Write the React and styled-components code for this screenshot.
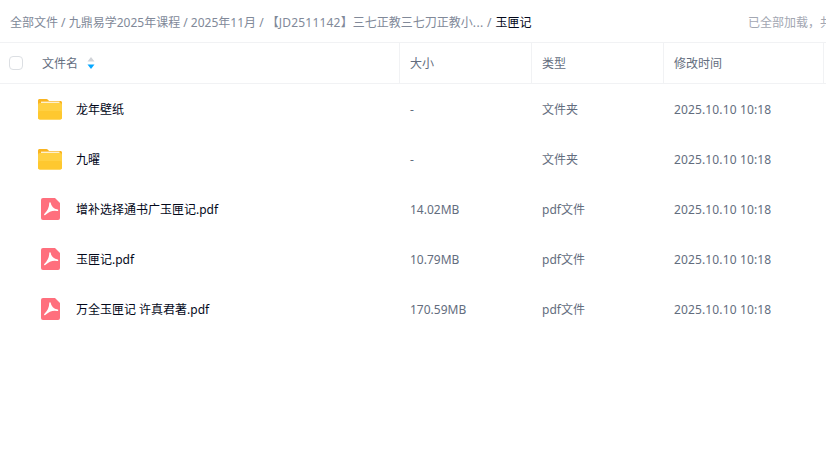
import React from 'react';
import styled, { createGlobalStyle } from 'styled-components';

const GlobalStyle = createGlobalStyle`
  html, body {
    margin: 0;
    padding: 0;
    background: #ffffff;
    overflow: hidden;
  }
  body {
    font-family: "Noto Sans", "Noto Sans CJK SC", sans-serif;
    line-height: 18px;
  }
`;

const Page = styled.div`
  height: 453px;
  overflow: hidden;
  width: 826px;
`;

const Breadcrumb = styled.div`
  align-items: center;
  box-sizing: border-box;
  display: flex;
  height: 42px;
  justify-content: space-between;
  padding-left: 10px;
  padding-top: 4px;
  white-space: nowrap;
`;

const Trail = styled.div`
  color: #818999;
  font-size: 12px;
`;

const Code = styled.span`
  letter-spacing: 0.2px;
`;

const Dots = styled.span`
  letter-spacing: 0.5px;
`;

const Current = styled.span`
  color: #03081a;
  margin-left: 1px;
`;

const Loaded = styled.div`
  color: #a3a7b2;
  font-size: 12px;
  overflow: hidden;
  width: 78px;
`;

const HeadRow = styled.div`
  border-bottom: 1px solid #f1f2f4;
  border-top: 1px solid #f1f2f4;
  display: grid;
  grid-template-columns: 400px 132px 132px 160px 2px;
  height: 40px;
`;

const HeadCell = styled.div`
  align-items: center;
  border-right: 1px solid #f1f2f4;
  color: #636d7e;
  display: flex;
  font-size: 12px;
  padding-left: ${props => (props.$first ? '9px' : '10px')};
`;

const Label = styled.span`
  padding-top: 2px;
`;

const Checkbox = styled.span`
  border: 1px solid #dcdfe3;
  border-radius: 4px;
  box-sizing: border-box;
  height: 14px;
  margin-right: 19px;
  width: 14px;
`;

const SortIcon = styled.svg`
  height: 14px;
  margin-left: 9px;
  width: 8px;
`;

const Row = styled.div`
  display: grid;
  grid-template-columns: 400px 132px 132px 160px;
  height: 50px;
`;

const NameCell = styled.div`
  align-items: center;
  color: #03081a;
  display: flex;
  font-size: 12px;
  padding-left: 38px;
`;

const IconSlot = styled.span`
  align-items: center;
  display: flex;
  justify-content: ${props => (props.$pdf ? 'center' : 'flex-start')};
  margin-right: 14px;
  width: 24px;
`;

const Cell = styled.div`
  align-items: center;
  color: #636d7e;
  display: flex;
  font-size: 12px;
  letter-spacing: ${props => (props.$date ? '0.13px' : '0')};
  padding-left: 10px;
  padding-top: 2px;
`;

const FolderIcon = () => (
  <svg width="24" height="22" viewBox="0 0 24 22">
    <path d="M1.5 1h6.8c.7 0 1.2.3 1.7.8L11 3h11.5c.8 0 1.5.7 1.5 1.5V8H0V2.500C0 1.700.7 1 1.500 1z" fill="#f9b420" />
    <path d="M3 3.600h18.500v3H3z" fill="#fdf0d0" />
    <rect x="0" y="5" width="24" height="16.500" rx="1.800" fill="#ffd042" />
    <rect x="0" y="13" width="24" height="8.500" rx="1.800" fill="#fec82f" />
  </svg>
);

const PdfIcon = () => (
  <svg width="19" height="22" viewBox="0 0 19 22">
    <path d="M2 0h12l5 5v15a2 2 0 0 1-2 2H2a2 2 0 0 1-2-2V2a2 2 0 0 1 2-2z" fill="#ff6f7d" />
    <path
      d="M9 5Q9.800 10.500 16.500 12.300Q9.800 10.800 3.800 16.500Q9 11.500 9 5z"
      fill="#ffffff"
      stroke="#ffffff"
      strokeWidth="1.500"
      strokeLinejoin="round"
    />
  </svg>
);

const rows = [
  { name: '龙年壁纸', size: '-', type: '文件夹', folder: true },
  { name: '九曜', size: '-', type: '文件夹', folder: true },
  { name: '增补选择通书广玉匣记.pdf', size: '14.02MB', type: 'pdf文件' },
  { name: '玉匣记.pdf', size: '10.79MB', type: 'pdf文件' },
  { name: '万全玉匣记 许真君著.pdf', size: '170.59MB', type: 'pdf文件' },
];

export default function App() {
  return (
    <Page>
      <GlobalStyle />
      <Breadcrumb>
        <Trail>
          全部文件 / 九鼎易学2025年课程 / 2025年11月 / 【<Code>JD2511142</Code>】三七正教三七刀正教小<Dots>...</Dots> / <Current>玉匣记</Current>
        </Trail>
        <Loaded>已全部加载，共5个</Loaded>
      </Breadcrumb>
      <HeadRow>
        <HeadCell $first>
          <Checkbox />
          <Label>文件名</Label>
          <SortIcon viewBox="0 0 8 14">
            <path d="M4 1l3.500 4.500h-7z" fill="#d0d3d8" />
            <path d="M4 13L.5 8.500h7z" fill="#06a7ff" />
          </SortIcon>
        </HeadCell>
        <HeadCell><Label>大小</Label></HeadCell>
        <HeadCell><Label>类型</Label></HeadCell>
        <HeadCell><Label>修改时间</Label></HeadCell>
      </HeadRow>
      {rows.map(row => (
        <Row key={row.name}>
          <NameCell>
            <IconSlot $pdf={!row.folder}>{row.folder ? <FolderIcon /> : <PdfIcon />}</IconSlot>
            <Label>{row.name}</Label>
          </NameCell>
          <Cell>{row.size}</Cell>
          <Cell>{row.type}</Cell>
          <Cell $date>2025.10.10 10:18</Cell>
        </Row>
      ))}
    </Page>
  );
}
